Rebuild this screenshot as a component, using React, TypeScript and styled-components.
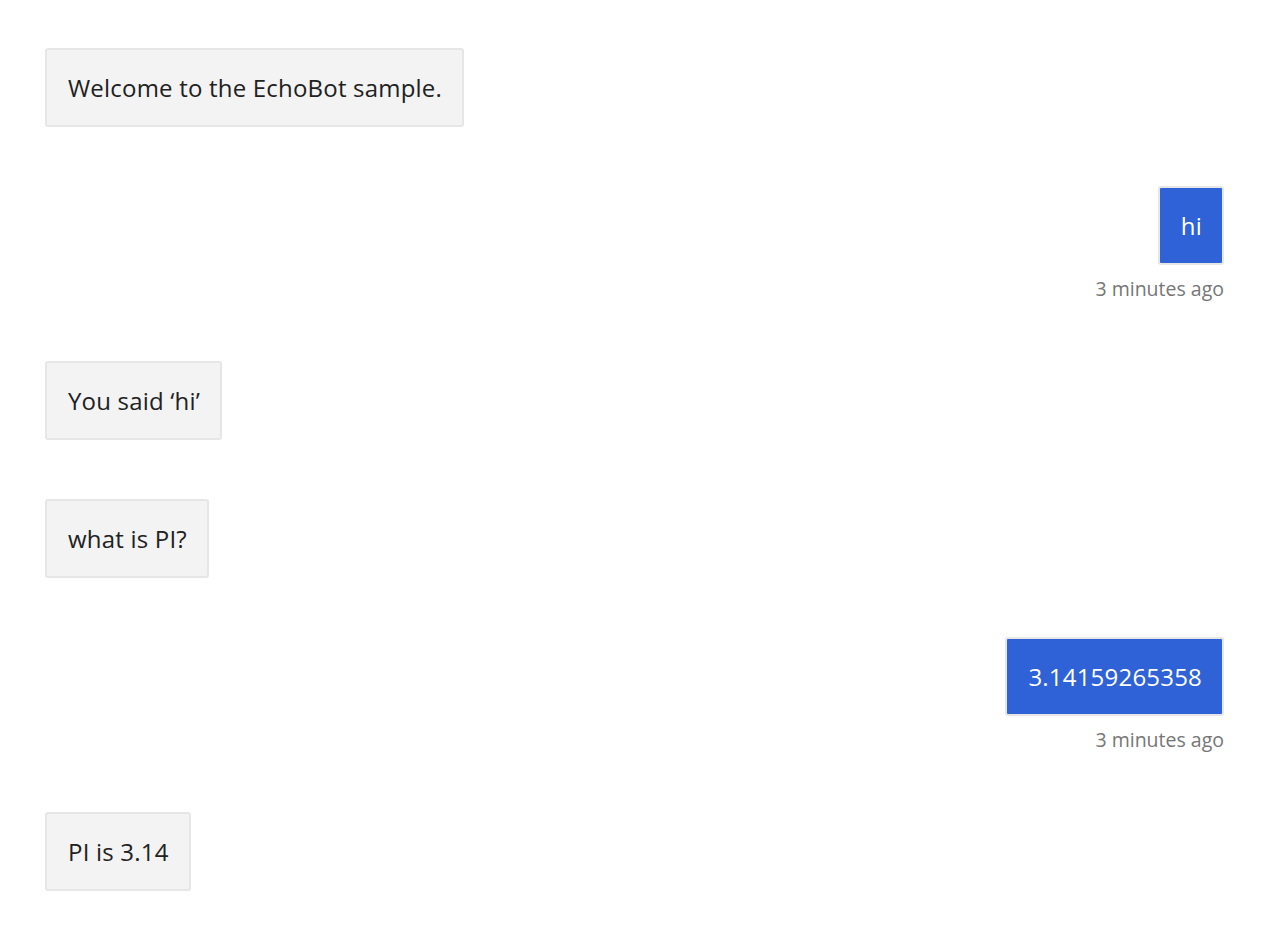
import { createGlobalStyle, styled } from "styled-components";

const GlobalStyle = createGlobalStyle`
  html, body {
    margin: 0;
    padding: 0;
    background: #ffffff;
  }
  body {
    font-family: "Open Sans", "Noto Sans", "Liberation Sans", sans-serif;
    color: #212121;
  }
`;

const Transcript = styled.div`
  display: flex;
  flex-direction: column;
  gap: 59px;
  padding: 48px 59px 40px 45px;
`;

const Activity = styled.div<{ $fromUser?: boolean }>`
  display: flex;
  flex-direction: column;
  align-items: ${(p) => (p.$fromUser ? "flex-end" : "flex-start")};
`;

const Bubble = styled.div<{ $fromUser?: boolean }>`
  box-sizing: border-box;
  height: 79px;
  display: flex;
  align-items: center;
  padding: 0 20px 0 21px;
  border: 2px solid #e6e6e6;
  border-radius: 3px;
  background: ${(p) => (p.$fromUser ? "#2f62d7" : "#f3f3f3")};
  color: ${(p) => (p.$fromUser ? "#ffffff" : "#212121")};
  font-size: 24px;
  letter-spacing: 0.2px;
  white-space: nowrap;
`;

const Timestamp = styled.div`
  margin-top: 10px;
  line-height: 27px;
  font-size: 19.5px;
  color: #767676;
`;

const messages = [
  { text: "Welcome to the EchoBot sample.", fromUser: false },
  { text: "hi", fromUser: true, time: "3 minutes ago" },
  { text: "You said \u2018hi\u2019", fromUser: false },
  { text: "what is PI?", fromUser: false },
  { text: "3.14159265358", fromUser: true, time: "3 minutes ago" },
  { text: "PI is 3.14", fromUser: false },
];

export default function App() {
  return (
    <>
      <GlobalStyle />
      <Transcript>
        {messages.map((m, i) => (
          <Activity key={i} $fromUser={m.fromUser}>
            <Bubble $fromUser={m.fromUser}>{m.text}</Bubble>
            {m.time && <Timestamp>{m.time}</Timestamp>}
          </Activity>
        ))}
      </Transcript>
    </>
  );
}
